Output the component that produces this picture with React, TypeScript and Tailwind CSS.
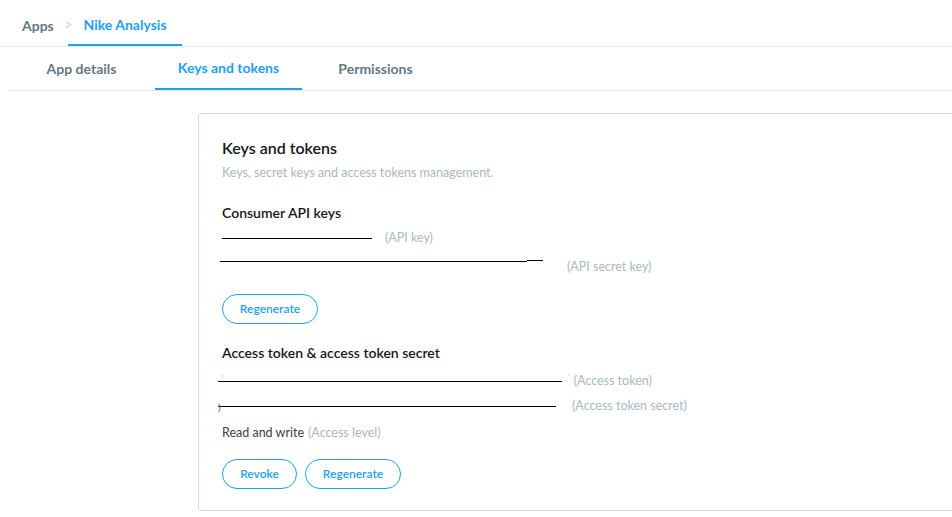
import React from "react";

const font = { fontFamily: '"Segoe UI", Lato, "Noto Sans", sans-serif' };

const Pill = ({ label, width }: { label: string; width: string }) => (
  <button
    className={`${width} h-[30px] rounded-full border-[1.5px] border-[#1da1f2] text-[12px] font-semibold text-[#1da1f2] bg-white`}
  >
    {label}
  </button>
);

export default function App() {
  const tabs = ["App details", "Keys and tokens", "Permissions"];

  return (
    <div className="min-h-screen w-[952px] overflow-hidden bg-white text-[#14171a]" style={font}>
      {/* breadcrumb */}
      <div className="flex h-[47px] items-stretch border-b border-[#e6ecf0] pl-[22px]">
        <div className="flex items-center pt-[4px] text-[14px] font-bold text-[#657786]">Apps</div>
        <div className="ml-[10px] flex items-center pt-[3px] text-[15px] font-light text-[#aab8c2]">&gt;</div>
        <div className="-ml-[4px] flex items-center border-b-2 border-[#1da1f2] px-[15px] pt-[4px] text-[14px] font-bold text-[#1da1f2]">
          Nike Analysis
        </div>
      </div>

      {/* tabs */}
      <div className="ml-[8px] flex h-[44px] border-b border-[#e6ecf0]">
        {tabs.map((t) => (
          <div
            key={t}
            className={`flex w-[147px] items-center justify-center text-[14px] font-bold ${
              t === "Keys and tokens"
                ? "border-b-2 border-[#1da1f2] text-[#1da1f2]"
                : "text-[#657786]"
            }`}
          >
            {t}
          </div>
        ))}
      </div>

      {/* card */}
      <div className="ml-[198px] mt-[22px] w-[780px] rounded-[3px] border border-[#d5dde3] px-[23px] pb-[21px] pt-[24px]">
        <h2 className="h-[20px] text-[16px] font-semibold leading-[20px]">Keys and tokens</h2>
        <p className="mt-[5px] h-[20px] text-[12.5px] leading-[20px] text-[#aab8c2]">
          Keys, secret keys and access tokens management.
        </p>

        <h3 className="mt-[20px] h-[20px] text-[14px] font-semibold leading-[20px]">Consumer API keys</h3>

        <div className="mt-[5px] flex h-[20px] items-center">
          <div className="h-px w-[150px] bg-black" />
          <span className="ml-[13px] text-[12.5px] text-[#aab8c2]">(API key)</span>
        </div>

        <div className="mt-[3px] flex h-[20px] items-start">
          <div className="-ml-[2px] mt-[10px] h-px w-[307px] bg-black" />
          <div className="mt-[9px] h-px w-[16px] bg-black" />
          <span className="ml-[24px] mt-[7px] text-[12.5px] text-[#aab8c2]">(API secret key)</span>
        </div>

        <div className="mt-[23px]">
          <Pill label="Regenerate" width="w-[96px]" />
        </div>

        <h3 className="mt-[19px] h-[20px] text-[14px] font-semibold leading-[20px]">
          Access token &amp; access token secret
        </h3>

        <div className="mt-[8px] flex h-[20px] items-center">
          <div className="relative -ml-[4px] h-px w-[344px] bg-black">
            <span className="absolute left-[4px] -top-[8px] text-[7px] text-[#9aa5ad]">'</span>
          </div>
          <span className="ml-[6px] -mt-[8px] text-[8px] text-[#aab8c2]">'</span>
          <span className="ml-[4px] text-[12.5px] text-[#aab8c2]">(Access token)</span>
        </div>

        <div className="mt-[5px] flex h-[20px] items-center">
          <div className="relative -ml-[4px] h-px w-[338px] bg-black">
            <span className="absolute left-[0px] -top-[5px] text-[10px] leading-[12px] text-[#555]">)</span>
          </div>
          <span className="ml-[16px] text-[12.5px] text-[#aab8c2]">(Access token secret)</span>
        </div>

        <div className="mt-[7px] flex h-[20px] items-center text-[12.5px]">
          <span className="text-[#3b4248]">Read and write</span>
          <span className="ml-[4px] text-[#aab8c2]">(Access level)</span>
        </div>

        <div className="mt-[16px] flex gap-[8px]">
          <Pill label="Revoke" width="w-[75px]" />
          <Pill label="Regenerate" width="w-[96px]" />
        </div>
      </div>
    </div>
  );
}
